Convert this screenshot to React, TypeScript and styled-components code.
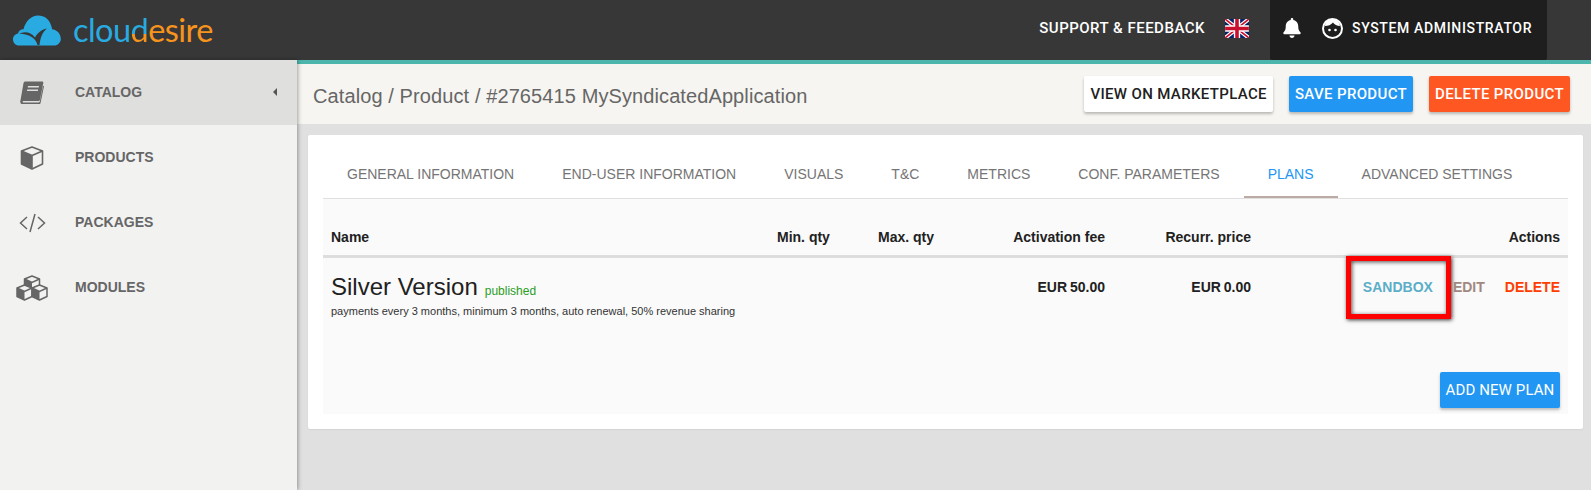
import React from "react";
import styled, { createGlobalStyle } from "styled-components";
import { FaBell } from "react-icons/fa";

const Global = createGlobalStyle`
  html, body { margin: 0; padding: 0; height: 490px; overflow: hidden; background: #e0e0e0; }
  #root { height: 490px; }
  * { box-sizing: border-box; }
  body { font-family: "Liberation Sans", Arial, sans-serif; font-size: 14px; color: #212121; }
`;

const Page = styled.div`
  height: 490px;
  display: flex;
  flex-direction: column;
`;

const TopBar = styled.header`
  height: 60px;
  flex: none;
  background: #373737;
  display: flex;
  align-items: stretch;
  padding: 0 44px 0 13px;
  color: #fff;
`;

const Brand = styled.div`
  display: flex;
  align-items: center;
  gap: 12px;
  flex: 1;
`;

const Wordmark = styled.div`
  font-family: "Lato", sans-serif;
  font-weight: 400;
  font-size: 32.5px;
  letter-spacing: -0.55px;
  line-height: 40px;
  color: #29abe2;
  margin-top: -1px;
`;

const WordmarkJoin = styled.span`
  background: linear-gradient(to bottom, #29abe2 0 62%, #f7941d 62% 100%);
  -webkit-background-clip: text;
  background-clip: text;
  color: transparent;
`;

const WordmarkRest = styled.span`
  color: #f7941d;
`;

const SupportLink = styled.a`
  font-family: "Roboto", sans-serif;
  font-weight: 500;
  font-size: 15px;
  letter-spacing: 0.5px;
  align-self: center;
  margin-top: -4px;
`;

const FlagWrap = styled.div`
  display: flex;
  align-items: center;
  margin: -4px 21px 0 20px;
`;

const UserBox = styled.div`
  width: 277px;
  background: #1e1e1e;
  display: flex;
  align-items: center;
  padding: 0 0 4px 13px;
  border-radius: 0 0 2px 2px;
`;

const BellIcon = styled(FaBell)`
  width: 18px;
  height: 20px;
  color: #fff;
`;

const FaceWrap = styled.div`
  display: flex;
  margin: 0 9px 0 21px;
`;

const UserName = styled.span`
  font-family: "Roboto", sans-serif;
  font-weight: 500;
  font-size: 14px;
  letter-spacing: 0.65px;
`;

const Body = styled.div`
  flex: 1;
  display: flex;
  min-height: 0;
`;

const Sidebar = styled.nav`
  width: 297px;
  flex: none;
  background: #f2f2f1;
  box-shadow: 1px 0 4px rgba(0, 0, 0, 0.35);
  position: relative;
  z-index: 1;
`;

const NavItem = styled.div<{ $active?: boolean }>`
  height: 65px;
  display: flex;
  align-items: center;
  background: ${(p) => (p.$active ? "#dfdfdd" : "transparent")};
  color: #666;
  font-weight: 700;
  font-size: 14px;
  padding-right: 20px;
`;

const NavIcon = styled.div`
  width: 64px;
  margin-right: 11px;
  display: flex;
  justify-content: center;
  color: #666;
`;

const NavLabel = styled.span`
  flex: 1;
  padding-bottom: 2px;
`;

const NavCaret = styled.span`
  width: 0;
  height: 0;
  border-top: 4px solid transparent;
  border-bottom: 4px solid transparent;
  border-right: 4px solid #555;
  margin-bottom: 2px;
`;

const Main = styled.main`
  flex: 1;
  min-width: 0;
  border-top: 4px solid #4db6ac;
  display: flex;
  flex-direction: column;
`;

const TitleBar = styled.div`
  height: 60px;
  flex: none;
  background: #f6f5f1;
  display: flex;
  align-items: center;
  padding: 0 21px 0 16px;
  gap: 16px;
`;

const Title = styled.h1`
  flex: 1;
  margin: 0;
  padding-top: 4px;
  font-size: 20px;
  font-weight: 400;
  letter-spacing: 0.1px;
  color: #666;
`;

const Button = styled.button<{ $bg: string; $fg: string }>`
  height: 36px;
  padding: 0 6px;
  border: 0;
  border-radius: 2px;
  background: ${(p) => p.$bg};
  color: ${(p) => p.$fg};
  font-family: "Roboto", sans-serif;
  font-weight: 500;
  font-size: 15px;
  letter-spacing: 0.35px;
  white-space: nowrap;
  box-shadow: 0 2px 3px rgba(0, 0, 0, 0.25);
`;

const Card = styled.section`
  margin: 11px 8px 0 11px;
  padding: 15px;
  background: #fff;
  border-radius: 2px;
  box-shadow: 0 1px 2px rgba(0, 0, 0, 0.06);
`;

const Tabs = styled.div`
  height: 49px;
  display: flex;
  border-bottom: 1px solid #e0e0e0;
`;

const Tab = styled.div<{ $active?: boolean }>`
  height: 48px;
  padding: 2px 24px 0;
  display: flex;
  align-items: center;
  font-size: 14px;
  color: ${(p) => (p.$active ? "#2196f3" : "#757575")};
  border-bottom: 2px solid ${(p) => (p.$active ? "#bcaaa4" : "transparent")};
`;

const Panel = styled.div`
  background: #fafafa;
  padding-bottom: 6px;
`;

const Row = styled.div`
  display: grid;
  grid-template-columns: 446px 101px 110px 133px 146px 1fr;
`;

const HeadRow = styled(Row)`
  height: 59px;
  border-bottom: 3px solid #ddd;
  align-items: end;
  padding-bottom: 8px;
`;

const HeadCell = styled.div<{ $right?: boolean }>`
  padding: 0 8px;
  font-weight: 700;
  font-size: 14px;
  line-height: 20px;
  text-align: ${(p) => (p.$right ? "right" : "left")};
  color: #212121;
`;

const DataRow = styled(Row)`
  height: 114px;
  padding-top: 16px;
`;

const NameCell = styled.div`
  padding: 0 8px;
`;

const PlanName = styled.div`
  font-size: 24px;
  line-height: 25px;
  color: #212121;
`;

const Status = styled.span`
  font-size: 12px;
  color: #2a9d1f;
  margin-left: 7px;
`;

const PlanInfo = styled.div`
  font-size: 11px;
  line-height: 15px;
  color: #333;
`;

const Amount = styled.div`
  padding: 3px 8px 0;
  font-weight: 700;
  font-size: 14px;
  line-height: 20px;
  word-spacing: -1px;
  text-align: right;
  color: #212121;
`;

const Actions = styled.div`
  padding: 3px 8px 0;
  display: flex;
  justify-content: flex-end;
  align-items: flex-start;
  gap: 20px;
  font-weight: 700;
  font-size: 14px;
  line-height: 20px;
`;

const ActionLink = styled.a<{ $color: string }>`
  color: ${(p) => p.$color};
  position: relative;
`;

const Highlight = styled.span`
  position: absolute;
  top: -21px;
  bottom: -22px;
  left: -17px;
  right: -18px;
  border: 5px solid #f00;
  box-shadow: 1px 1px 4px rgba(0, 0, 0, 0.8), inset 1px 1px 4px rgba(0, 0, 0, 0.7);
  pointer-events: none;
`;

const PanelFooter = styled.div`
  display: flex;
  justify-content: flex-end;
  padding-right: 8px;
`;

const AddButton = styled(Button)`
  font-weight: 400;
  letter-spacing: 0.1px;
  width: 120px;
  padding: 0;
`;

const CloudLogo = () => (
  <svg width="48" height="31" viewBox="0 0 48 31">
    <path
      fill="#29abe2"
      d="M6 30.5C2.5 30.5 0 27.8 0 24.5c0-3 2.2-5.4 5-5.9C5.6 15.8 8 14 10.5 14.3 12.5 6 18.5 0.5 25 0.5c6.5 0 11.5 4 13.2 10.2 0.6 1.4 0.8 2.8 0.8 3.6 5 0.5 8.8 4.6 8.8 9.4 0 3.8-3 6.8-6.8 6.8z"
    />
    <path
      fill="#373737"
      d="M8 18c5-1.5 10-.5 14 4.5 2-4 6-8 12-9-4 3-6.5 8-7.5 16.5h-2c-1.5-6-7-11-18.5-11.5z"
    />
  </svg>
);

const UkFlag = () => (
  <svg width="24" height="19" viewBox="0 0 60 48">
    <rect width="60" height="48" fill="#012169" />
    <path d="M0 0L60 48M60 0L0 48" stroke="#fff" strokeWidth="10" />
    <path d="M0 0L60 48M60 0L0 48" stroke="#c8102e" strokeWidth="4" />
    <path d="M30 0V48M0 24H60" stroke="#fff" strokeWidth="16" />
    <path d="M30 0V48M0 24H60" stroke="#c8102e" strokeWidth="9" />
  </svg>
);

const FaceIcon = () => (
  <svg width="21" height="21" viewBox="0 0 21 21">
    <circle cx="10.5" cy="10.5" r="9.5" fill="#1e1e1e" stroke="#fff" strokeWidth="2" />
    <path fill="#fff" d="M3 8c3 0 6-1 8-3.5 1.5 2 4 3.5 7 3.5 0-3.5-3.5-7-7.5-7S3 4 3 8z" />
    <circle cx="7.5" cy="12" r="1.3" fill="#fff" />
    <circle cx="13.5" cy="12" r="1.3" fill="#fff" />
  </svg>
);

const BookIcon = () => (
  <svg width="24" height="23" viewBox="0 0 24 23" fill="currentColor">
    <path d="M5.5 0.5h16.5c1 0 1.5 .7 1.3 1.6L20 18.5c-.2 1-.8 1.5-1.8 1.5H4.2c-1.2 0-1.6 .6-1.6 1 0 .3 .3 .6 1 .6H18.5c.7 0 1.1-.3 1.3-.8l3.3-16 .9 .4-3.4 16.6c-.2 1-1 1.7-2 1.7H3.5C1.3 23.5 0 22.2 .3 20.2L3.5 2.2C3.7 1.2 4.5 .5 5.5 .5z" />
    <path fill="#dfdfdd" d="M8 5h11l-.3 1.6H7.7zM7.2 8.4h11l-.3 1.6H6.9z" />
  </svg>
);

const CubeIcon = () => (
  <svg width="24" height="24" viewBox="0 0 24 24" fill="none" stroke="currentColor" strokeWidth="1.6" strokeLinejoin="round">
    <path d="M12 1L22.5 5v13L12 23 1.5 18V5z" />
    <path d="M1.5 5L12 9.5 22.5 5M12 9.5V23" />
    <path fill="currentColor" stroke="none" d="M1.5 5L12 9.5V23L1.5 18z" />
  </svg>
);

const CodeIcon = () => (
  <svg width="27" height="20" viewBox="0 0 27 20" fill="none" stroke="currentColor" strokeWidth="1.5">
    <path d="M8 4L1.5 10 8 16M19 4l6.5 6L19 16M16 1l-5 18" />
  </svg>
);

const SmallCube = ({ x, y }: { x: number; y: number }) => (
  <g transform={`translate(${x} ${y})`}>
    <path d="M7.5 0L15 3v8.5L7.5 15 0 11.5V3z" fill="#f2f2f1" stroke="currentColor" strokeWidth="1.5" strokeLinejoin="round" />
    <path d="M0 3L7.5 6.5V15L0 11.5z" fill="currentColor" />
    <path d="M0 3L7.5 6.5 15 3" fill="none" stroke="currentColor" strokeWidth="1.5" />
  </g>
);

const CubesIcon = () => (
  <svg width="32" height="26" viewBox="0 0 32 26" color="#666">
    <SmallCube x={8.5} y={1} />
    <SmallCube x={1} y={10} />
    <SmallCube x={16} y={10} />
  </svg>
);

const navItems = [
  { label: "CATALOG", icon: <BookIcon />, active: true },
  { label: "PRODUCTS", icon: <CubeIcon /> },
  { label: "PACKAGES", icon: <CodeIcon /> },
  { label: "MODULES", icon: <CubesIcon /> },
];

const tabs = [
  "GENERAL INFORMATION",
  "END-USER INFORMATION",
  "VISUALS",
  "T&C",
  "METRICS",
  "CONF. PARAMETERS",
  "PLANS",
  "ADVANCED SETTINGS",
];

export default function App() {
  return (
    <Page>
      <Global />
      <TopBar>
        <Brand>
          <CloudLogo />
          <Wordmark>
            clou<WordmarkJoin>d</WordmarkJoin>
            <WordmarkRest>esire</WordmarkRest>
          </Wordmark>
        </Brand>
        <SupportLink>SUPPORT &amp; FEEDBACK</SupportLink>
        <FlagWrap>
          <UkFlag />
        </FlagWrap>
        <UserBox>
          <BellIcon />
          <FaceWrap>
            <FaceIcon />
          </FaceWrap>
          <UserName>SYSTEM ADMINISTRATOR</UserName>
        </UserBox>
      </TopBar>
      <Body>
        <Sidebar>
          {navItems.map((item) => (
            <NavItem key={item.label} $active={item.active}>
              <NavIcon>{item.icon}</NavIcon>
              <NavLabel>{item.label}</NavLabel>
              {item.active && <NavCaret />}
            </NavItem>
          ))}
        </Sidebar>
        <Main>
          <TitleBar>
            <Title>Catalog / Product / #2765415 MySyndicatedApplication</Title>
            <Button $bg="#fff" $fg="#212121">VIEW ON MARKETPLACE</Button>
            <Button $bg="#2196f3" $fg="#fff">SAVE PRODUCT</Button>
            <Button $bg="#ff5722" $fg="#fff">DELETE PRODUCT</Button>
          </TitleBar>
          <Card>
            <Tabs>
              {tabs.map((t) => (
                <Tab key={t} $active={t === "PLANS"}>{t}</Tab>
              ))}
            </Tabs>
            <Panel>
              <HeadRow>
                <HeadCell>Name</HeadCell>
                <HeadCell>Min. qty</HeadCell>
                <HeadCell>Max. qty</HeadCell>
                <HeadCell $right>Activation fee</HeadCell>
                <HeadCell $right>Recurr. price</HeadCell>
                <HeadCell $right>Actions</HeadCell>
              </HeadRow>
              <DataRow>
                <NameCell>
                  <PlanName>
                    Silver Version<Status>published</Status>
                  </PlanName>
                  <PlanInfo>payments every 3 months, minimum 3 months, auto renewal, 50% revenue sharing</PlanInfo>
                </NameCell>
                <div />
                <div />
                <Amount>EUR 50.00</Amount>
                <Amount>EUR 0.00</Amount>
                <Actions>
                  <ActionLink $color="#5aaec8">
                    SANDBOX
                    <Highlight />
                  </ActionLink>
                  <ActionLink $color="#a1887f">EDIT</ActionLink>
                  <ActionLink $color="#ff3d00">DELETE</ActionLink>
                </Actions>
              </DataRow>
              <PanelFooter>
                <AddButton $bg="#2196f3" $fg="#fff">ADD NEW PLAN</AddButton>
              </PanelFooter>
            </Panel>
          </Card>
        </Main>
      </Body>
    </Page>
  );
}
